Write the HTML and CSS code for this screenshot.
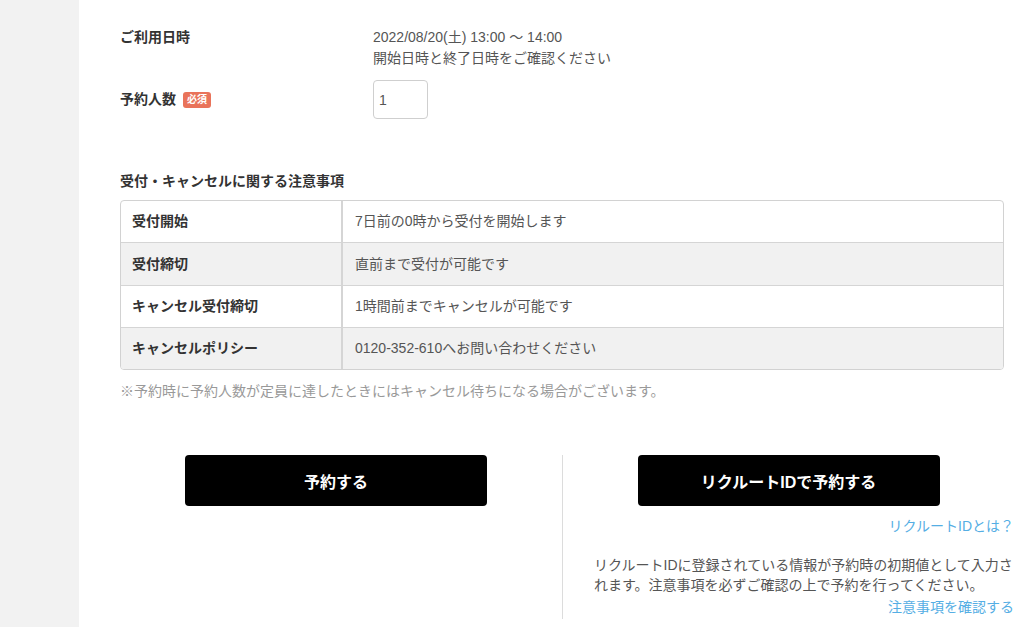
FILE: index.html
```html
<!DOCTYPE html>
<html lang="ja">
<head>
<meta charset="utf-8">
<title>予約</title>
<link rel="stylesheet" href="styles.css">
</head>
<body>
<div class="page">
  <aside class="sidebar"></aside>
  <main class="main">
    <div class="form-row">
      <div class="form-label">ご利用日時</div>
      <div class="form-value">
        <div>2022/08/20(土) 13:00 〜 14:00</div>
        <div>開始日時と終了日時をご確認ください</div>
      </div>
    </div>
    <div class="form-row form-row-center">
      <div class="form-label">予約人数<span class="badge">必須</span></div>
      <div class="form-value"><input class="num-input" type="text" value="1"></div>
    </div>

    <h2 class="section-title">受付・キャンセルに関する注意事項</h2>
    <div class="table-wrap">
      <table class="notice-table">
        <tr><th>受付開始</th><td>7日前の0時から受付を開始します</td></tr>
        <tr class="alt"><th>受付締切</th><td>直前まで受付が可能です</td></tr>
        <tr><th>キャンセル受付締切</th><td>1時間前までキャンセルが可能です</td></tr>
        <tr class="alt"><th>キャンセルポリシー</th><td>0120-352-610へお問い合わせください</td></tr>
      </table>
    </div>
    <p class="note">※予約時に予約人数が定員に達したときにはキャンセル待ちになる場合がございます。</p>

    <div class="actions">
      <div class="action-col">
        <button class="btn">予約する</button>
      </div>
      <div class="action-col action-col-right">
        <button class="btn">リクルートIDで予約する</button>
        <a class="link link-what" href="#">リクルートIDとは？</a>
        <p class="desc">リクルートIDに登録されている情報が予約時の初期値として入力されます。注意事項を必ずご確認の上で予約を行ってください。</p>
        <a class="link link-check" href="#">注意事項を確認する</a>
      </div>
    </div>
  </main>
</div>
</body>
</html>
```

FILE: styles.css
```css
* { box-sizing: border-box; }
html, body { margin: 0; padding: 0; height: 100%; overflow: hidden; }
body {
  font-family: "Liberation Sans", "Noto Sans CJK JP", sans-serif;
  font-size: 14px;
  line-height: 21px;
  color: #555;
  background: #fff;
}
.page { display: flex; min-height: 100vh; }
.sidebar { width: 79px; flex: none; background: #f2f2f2; }
.main { flex: 1; padding: 27px 20px 0 41px; }

.form-row { display: flex; align-items: flex-start; }
.form-row + .form-row { margin-top: 11px; }
.form-row-center { align-items: center; }
.form-label {
  width: 253px;
  flex: none;
  font-weight: bold;
  color: #333;
  display: flex;
  align-items: center;
}
.form-value { color: #555; }
.badge {
  display: inline-block;
  margin-left: 7px;
  width: 28px;
  height: 16px;
  line-height: 16px;
  text-align: center;
  font-size: 10px;
  font-weight: bold;
  color: #fff;
  background: #e9735a;
  border-radius: 3px;
}
.num-input {
  display: block;
  width: 55px;
  height: 39px;
  border: 1px solid #cfcfcf;
  border-radius: 4px;
  padding: 0 5px;
  font: inherit;
  font-size: 14px;
  color: #555;
  background: #fff;
}

.section-title {
  margin: 52px 0 0;
  font-size: 14px;
  line-height: 21px;
  font-weight: bold;
  color: #333;
}
.table-wrap {
  margin-top: 8px;
  border: 1px solid #d2d2d2;
  border-radius: 4px;
  overflow: hidden;
}
.notice-table {
  width: 100%;
  border-collapse: separate;
  border-spacing: 0;
}
.notice-table th,
.notice-table td {
  height: 41px;
  padding: 0 12px;
  text-align: left;
  vertical-align: middle;
  font-size: 14px;
  line-height: 21px;
}
.notice-table tr + tr th,
.notice-table tr + tr td { border-top: 1px solid #d5d5d5; height: 42px; }
.notice-table tr:nth-child(2) th,
.notice-table tr:nth-child(2) td { height: 43px; }
.notice-table th {
  width: 222px;
  padding-left: 11px;
  font-weight: bold;
  color: #333;
  border-right: 2px solid #d5d5d5;
}
.notice-table td { color: #555; }
.notice-table tr.alt th,
.notice-table tr.alt td { background: #f1f1f1; }

.note {
  margin: 11px 0 0;
  color: #999;
}

.actions {
  display: grid;
  grid-template-columns: 1fr 1fr;
  margin: 53px -10px 0;
}
.action-col { display: flex; flex-direction: column; align-items: center; }
.action-col-right {
  border-left: 1px solid #dcdcdc;
  align-items: stretch;
  padding-bottom: 1px;
}
.btn {
  display: block;
  width: 302px;
  height: 51px;
  border: none;
  border-radius: 4px;
  background: #000;
  color: #fff;
  font-family: inherit;
  font-size: 16px;
  font-weight: bold;
  cursor: pointer;
}
.action-col-right .btn { align-self: center; }
.link {
  display: block;
  text-align: right;
  color: #55aee4;
  text-decoration: none;
}
.link-what { margin-top: 10px; }
.link-check { margin-top: 2px; }
.desc {
  margin: 18px 0 0;
  padding-left: 31px;
  line-height: 20px;
  color: #555;
}
```
